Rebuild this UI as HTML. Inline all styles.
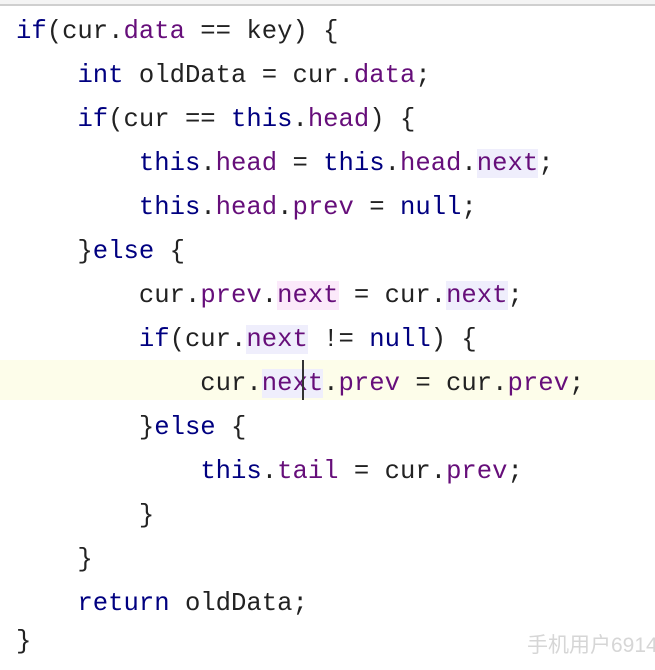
<!DOCTYPE html><html><head><meta charset="utf-8"><style>
body{margin:0;width:655px;height:667px;background:#fff;overflow:hidden;position:relative;font-family:"Liberation Mono","Noto Serif CJK SC",monospace;font-size:25.6px;color:#222}
.top{position:absolute;left:0;top:0;width:655px;height:4px;border-bottom:2px solid #cfcfcf;background:#f4f4f4}
.hl{position:absolute;left:0;top:360px;width:655px;height:40px;background:#fdfdea}
.code{position:absolute;left:16px;top:10px;white-space:pre;line-height:44px}
.k{color:#000080}
.f{color:#660e7a}
.b{background:#efeefc}
.p{background:#fbe9fa}
.wm{position:absolute;left:527px;top:629px;white-space:nowrap;font-family:"Liberation Sans","Noto Sans CJK SC",sans-serif;font-size:21px;color:#d6d6d6}
.cur{position:absolute;left:302px;top:360px;width:2px;height:40px;background:#333}
</style></head><body>
<div class="top"></div><div class="hl"></div>
<div class="code"><span class="k">if</span>(cur.<span class="f">data</span> == key) {
    <span class="k">int</span> oldData = cur.<span class="f">data</span>;
    <span class="k">if</span>(cur == <span class="k">this</span>.<span class="f">head</span>) {
        <span class="k">this</span>.<span class="f">head</span> = <span class="k">this</span>.<span class="f">head</span>.<span class="f b">next</span>;
        <span class="k">this</span>.<span class="f">head</span>.<span class="f">prev</span> = <span class="k">null</span>;
    }<span class="k">else</span> {
        cur.<span class="f">prev</span>.<span class="f p">next</span> = cur.<span class="f b">next</span>;
        <span class="k">if</span>(cur.<span class="f b">next</span> != <span class="k">null</span>) {
            cur.<span class="f b">next</span>.<span class="f">prev</span> = cur.<span class="f">prev</span>;
        }<span class="k">else</span> {
            <span class="k">this</span>.<span class="f">tail</span> = cur.<span class="f">prev</span>;
        }
    }
    <span class="k">return</span> oldData;
<span style="position:relative;top:-6px">}</span></div>
<div class="cur"></div>
<div class="wm">手机用户6914c</div>
</body></html>
